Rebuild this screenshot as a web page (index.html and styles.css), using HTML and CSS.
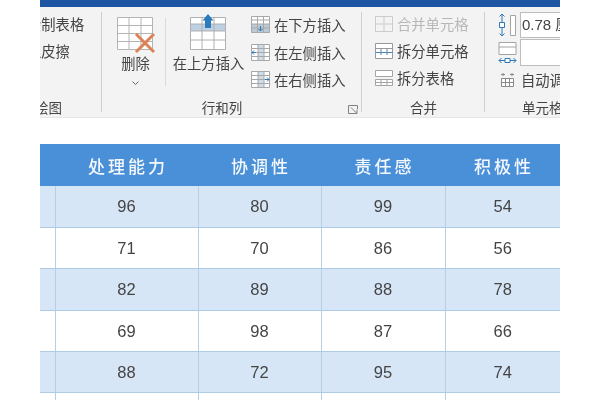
FILE: index.html
```html
<!DOCTYPE html>
<html lang="zh-CN">
<head>
<meta charset="utf-8">
<title>表格工具</title>
<link rel="stylesheet" href="styles.css">
</head>
<body>
<div class="stage">
  <div class="titlebar"></div>
  <div class="ribbon">
    <section class="group group-draw">
      <div class="group-body draw-list">
        <div class="line">绘制表格</div>
        <div class="line">橡皮擦</div>
      </div>
      <div class="group-label draw-label">绘图</div>
    </section>
    <section class="group group-rows">
      <div class="group-body rows-body">
        <div class="big-btn del-btn">
          <svg class="big-icon del-icon" width="37" height="34" viewBox="0 0 37 34">
            <path d="M.5 .5h35v32h-35zM12 .5v32M24 .5v32M.5 8.500h35M.5 16.500h35M.5 24.500h35" fill="#fff" stroke="#b4b4b4"/>
            <path d="M19 17l18 18M37 17L19 35" fill="none" stroke="#dc8256" stroke-width="3"/>
          </svg>
          <span>删除</span>
          <svg class="chev" width="7" height="4" viewBox="0 0 7 4"><path d="M.5 .5l3 3 3-3" fill="none" stroke="#666"/></svg>
        </div>
        <div class="vsep"></div>
        <div class="big-btn ins-btn">
          <svg class="big-icon" width="37" height="36" viewBox="0 0 37 36">
            <path d="M.5 3.500h35v32h-35z" fill="#fff"/>
            <path d="M.5 10h35v7H.5z" fill="#bfd0e2"/>
            <path d="M.5 3.500h35v32h-35zM12 3.500v32M24 3.500v32M.5 10h35M.5 17h35M.5 26h35" fill="none" stroke="#b0b0b0"/>
            <path d="M18 0l5.500 6.500H21V14h-6V6.500h-2.500z" fill="#2a7cbd"/>
          </svg>
          <span>在上方插入</span>
        </div>
        <div class="small-list">
          <div class="small-item">
            <svg width="19" height="17" viewBox="0 0 19 17"><path d="M.5 .5h18v16H.5z" fill="#fff"/><path d="M.5 8h18v8.500H.5z" fill="#bcc9d6"/><path d="M.5 .5h18v16H.5zM6.500 .5v16M12.500 .5v16M.5 4h18M.5 8h18M.5 12h18" fill="none" stroke="#a8a8a8"/><path d="M9.500 10v5M7.500 13l2 2 2-2" fill="none" stroke="#2d78b8"/></svg>
            <span>在下方插入</span>
          </div>
          <div class="small-item">
            <svg width="19" height="17" viewBox="0 0 19 17"><path d="M.5 .5h18v16H.5z" fill="#fff"/><path d="M7 .5h6v16H7z" fill="#cddbe9"/><path d="M.5 .5h18v16H.5zM7 .5v16M13 .5v16M.5 4.500h18M.5 8.500h18M.5 12.500h18" fill="none" stroke="#a8a8a8"/><path d="M1 8.500h4M3 6.500l-2 2 2 2" fill="none" stroke="#2d78b8"/></svg>
            <span>在左侧插入</span>
          </div>
          <div class="small-item">
            <svg width="19" height="17" viewBox="0 0 19 17"><path d="M.5 .5h18v16H.5z" fill="#fff"/><path d="M7 .5h6v16H7z" fill="#cddbe9"/><path d="M.5 .5h18v16H.5zM7 .5v16M13 .5v16M.5 4.500h18M.5 8.500h18M.5 12.500h18" fill="none" stroke="#a8a8a8"/><path d="M14 8.500h4M16 6.500l2 2-2 2" fill="none" stroke="#2d78b8"/></svg>
            <span>在右侧插入</span>
          </div>
        </div>
      </div>
      <div class="group-label rows-label">
        行和列
        <svg class="launcher" width="10" height="9" viewBox="0 0 10 9"><path d="M9.500 4V.5H.5v8H5M3 2.500l5.500 5.500M9 4.500V8.500H5" fill="none" stroke="#808080"/></svg>
      </div>
    </section>
    <section class="group group-merge">
      <div class="group-body merge-list">
        <div class="merge-item disabled">
          <svg width="18" height="16" viewBox="0 0 18 16"><path d="M.5 .5h17v15H.5zM.5 8h17M9 .5V15.500" fill="none" stroke="#cbcbcb"/></svg>
          <span>合并单元格</span>
        </div>
        <div class="merge-item">
          <svg width="18" height="16" viewBox="0 0 18 16"><path d="M.5 .5h17v15H.5z" fill="#fff" stroke="#999"/><path d="M.5 5.500h17" stroke="#999"/><path d="M.5 9.500h17M6 6v6M12 6v6" fill="none" stroke="#4f86b8"/></svg>
          <span>拆分单元格</span>
        </div>
        <div class="merge-item">
          <svg width="18" height="16" viewBox="0 0 18 16"><path d="M.5 .5h17v6H.5zM.5 9.500h17v6H.5zM6 9.500v6M12 9.500v6M.5 12.500h17" fill="#fff" stroke="#a4a4a4"/></svg>
          <span>拆分表格</span>
        </div>
      </div>
      <div class="group-label">合并</div>
    </section>
    <section class="group group-cell">
      <div class="group-body cell-body">
        <div class="size-row">
          <svg width="19" height="24" viewBox="0 0 19 24"><path d="M4 1v22M1.500 3.500L4 1l2.500 2.500M1.500 20.500L4 23l2.500-2.500" fill="none" stroke="#2d78b8"/><path d="M1.500 9.500h5v5h-5z" fill="#fff" stroke="#2d78b8"/><path d="M12.500 2.500h5v20h-5z" fill="#fff" stroke="#a4a4a4"/></svg>
          <div class="size-input">0.78 厘米</div>
        </div>
        <div class="size-row second">
          <svg width="19" height="24" viewBox="0 0 19 24"><path d="M1 1.500h17v12H1zM1 6h17" fill="#fff" stroke="#a4a4a4"/><path d="M1 19.500h17M3.500 17L1 19.500 3.500 22M15.500 17l2.500 2.500-2.500 2.500" fill="none" stroke="#2d78b8"/><path d="M7 17.500h5v4H7z" fill="#fff" stroke="#2d78b8"/></svg>
          <div class="size-input"></div>
        </div>
        <div class="auto-row">
          <svg width="15" height="15" viewBox="0 0 15 15"><path d="M3 1v3M12 1v3M1 2.500h4M10 2.500h4" fill="none" stroke="#8a8a8a"/><path d="M1.500 6.500h12v8h-12zM5.500 6.500v8M9.500 6.500v8M1.500 10.500h12" fill="#fff" stroke="#8a8a8a"/></svg>
          <span>自动调整</span>
        </div>
      </div>
      <div class="group-label cell-label">单元格大小</div>
    </section>
  </div>
  <table class="score">
    <colgroup>
      <col class="c0"><col class="c1"><col class="c2"><col class="c3"><col class="c4">
    </colgroup>
    <thead>
      <tr><th></th><th>处理能力</th><th>协调性</th><th>责任感</th><th>积极性</th></tr>
    </thead>
    <tbody>
      <tr class="band"><td></td><td>96</td><td>80</td><td>99</td><td>54</td></tr>
      <tr><td></td><td>71</td><td>70</td><td>86</td><td>56</td></tr>
      <tr class="band"><td></td><td>82</td><td>89</td><td>88</td><td>78</td></tr>
      <tr><td></td><td>69</td><td>98</td><td>87</td><td>66</td></tr>
      <tr class="band"><td></td><td>88</td><td>72</td><td>95</td><td>74</td></tr>
      <tr><td></td><td></td><td></td><td></td><td></td></tr>
    </tbody>
  </table>
</div>
</body>
</html>
```
FILE: styles.css
```css
* { box-sizing: border-box; }
html, body { margin: 0; height: 100%; background: #fff; overflow: hidden; }
.stage {
  width: 520px;
  height: 400px;
  margin-left: 40px;
  overflow: hidden;
  background: #fff;
  color: #444;
  font-family: "Noto Sans CJK SC", "Liberation Sans", sans-serif;
  font-size: 14.300px;
  filter: blur(0.35px);
}
.titlebar { height: 7px; background: #1f56a4; }
.ribbon {
  display: flex;
  height: 111px;
  background: #f3f3f3;
  border-bottom: 1px solid #e6e6e6;
}
.group {
  display: flex;
  flex-direction: column;
  flex: none;
  height: 100%;
  overflow: hidden;
  position: relative;
}
.group::after {
  content: "";
  position: absolute;
  right: 0;
  top: 5px;
  bottom: 5px;
  width: 1px;
  background: #cfcfcf;
}
.group-body { flex: 1; min-height: 0; }
.group-label {
  height: 26px;
  line-height: 20px;
  padding-top: 6px;
  text-align: center;
  font-size: 13.500px;
  white-space: nowrap;
  position: relative;
  flex: none;
}
.group-draw { width: 62px; }
.draw-list { margin-left: -13px; padding-top: 7px; }
.line { height: 27px; line-height: 20px; white-space: nowrap; }
.draw-label { text-align: left; margin-left: -5px; }

.group-rows { width: 260px; }
.rows-body { display: flex; padding: 7px 0 0 15px; }
.big-btn { display: flex; flex-direction: column; align-items: center; flex: none; white-space: nowrap; }
.big-btn span { line-height: 20px; margin-top: 3px; }
.big-icon { display: block; overflow: visible; }
.del-icon { margin: 3px 0 -1px; }
.del-btn { width: 37px; }
.chev { margin-top: 8px; }
.vsep { width: 1px; height: 68px; margin: 4px 0 0 11px; background: #d9d9d9; flex: none; }
.ins-btn { width: 73px; margin-left: 6px; }
.small-list { margin-left: 6px; margin-top: -3px; }
.small-item { display: flex; align-items: center; gap: 4px; height: 27.500px; white-space: nowrap; }
.small-item svg { flex: none; }
.rows-label { padding-right: 20px; }
.launcher { position: absolute; right: 4px; top: 14px; }

.group-merge { width: 123px; }
.merge-list { padding: 3px 0 0 13px; }
.merge-item { display: flex; align-items: center; gap: 4px; height: 27px; white-space: nowrap; }
.merge-item svg { flex: none; }
.disabled { color: #b8b8b8; }

.group-cell { width: 75px; }
.group-cell::after { display: none; }
.cell-body { padding: 5px 0 0 13px; }
.size-row { display: flex; align-items: center; gap: 3px; height: 26px; white-space: nowrap; }
.size-row.second { height: 27px; margin-top: 1px; }
.size-row svg { flex: none; }
.size-input {
  flex: none;
  width: 60px;
  height: 100%;
  padding-left: 1px;
  background: #fff;
  border: 1px solid #bdbdbd;
  font-family: "Liberation Sans", "Noto Sans CJK SC", sans-serif;
  font-size: 15px;
  line-height: 24px;
}
.auto-row { display: flex; align-items: center; gap: 6px; height: 27px; padding-left: 2px; white-space: nowrap; }
.auto-row svg { flex: none; }
.cell-label { text-align: left; padding-left: 37px; }

.score {
  width: 520px;
  margin-top: 26px;
  table-layout: fixed;
  border-collapse: collapse;
  font-family: "Liberation Sans", sans-serif;
  font-size: 16.500px;
  color: #444;
}
.c0 { width: 15px; }
.c1 { width: 143px; }
.c2 { width: 123px; }
.c3 { width: 124px; }
.c4 { width: 115px; }
th {
  height: 42px;
  padding: 0 0 0 3px;
  background: #4a90d8;
  color: #f4f8fc;
  font-family: "Noto Sans CJK SC", sans-serif;
  font-size: 17px;
  font-weight: 500;
  letter-spacing: 3px;
  text-align: center;
}
td {
  height: 41.400px;
  padding: 1px 0 0;
  text-align: center;
  border-bottom: 1px solid #aecbe6;
  border-left: 1px solid #b7cfe3;
}
td:first-child { border-left: 0; }
.band td { background: #d7e6f7; }
```
